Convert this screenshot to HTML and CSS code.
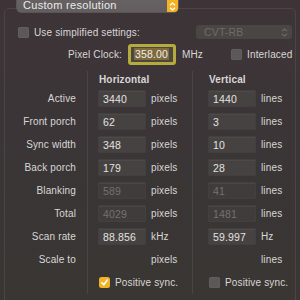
FILE: index.html
```html
<!DOCTYPE html>
<html>
<head>
<meta charset="utf-8">
<link rel="stylesheet" href="styles.css">
</head>
<body>
<div class="popup">
  <span class="popup-text">Custom resolution</span>
  <span class="stepper"><svg width="7" height="9" viewBox="0 0 7 9"><path d="M1 3.2 L3.5 1 L6 3.2 M1 5.8 L3.5 8 L6 5.8" fill="none" stroke="#fff" stroke-width="1.2"/></svg></span>
</div>
<div class="group">
  <div class="row-top">
    <label class="check"><span class="box"></span><span>Use simplified settings:</span></label>
    <div class="popup-dis"><span>CVT-RB</span><svg width="7" height="9" viewBox="0 0 7 9"><path d="M1 3.2 L3.5 1 L6 3.2 M1 5.8 L3.5 8 L6 5.8" fill="none" stroke="#6d6a68" stroke-width="1.1"/></svg></div>
  </div>
  <div class="row-clock">
    <span class="clock-label">Pixel Clock:</span>
    <div class="focus"><div class="clock-field"><span class="sel">358.00</span></div></div>
    <span class="unit-mhz">MHz</span>
    <label class="check interlaced"><span class="box"></span><span>Interlaced</span></label>
  </div>
  <div class="table">
    <div class="col labels">
      <div class="head"></div>
      <div class="cell">Active</div>
      <div class="cell">Front porch</div>
      <div class="cell">Sync width</div>
      <div class="cell">Back porch</div>
      <div class="cell">Blanking</div>
      <div class="cell">Total</div>
      <div class="cell">Scan rate</div>
      <div class="cell">Scale to</div>
      <div class="cell"></div>
    </div>
    <div class="col hcol">
      <div class="head">Horizontal</div>
      <div class="cell"><span class="field">3440</span><span class="unit">pixels</span></div>
      <div class="cell"><span class="field">62</span><span class="unit">pixels</span></div>
      <div class="cell"><span class="field">348</span><span class="unit">pixels</span></div>
      <div class="cell"><span class="field">179</span><span class="unit">pixels</span></div>
      <div class="cell"><span class="field dis">589</span><span class="unit">pixels</span></div>
      <div class="cell"><span class="field dis">4029</span><span class="unit">pixels</span></div>
      <div class="cell"><span class="field">88.856</span><span class="unit">kHz</span></div>
      <div class="cell"><span class="field blank"></span><span class="unit">pixels</span></div>
      <div class="cell"><label class="check"><span class="box on"><svg width="9" height="9" viewBox="0 0 9 9"><path d="M1.8 4.8 L3.8 6.8 L7.3 2" fill="none" stroke="#fff" stroke-width="1.6" stroke-linecap="round" stroke-linejoin="round"/></svg></span><span>Positive sync.</span></label></div>
    </div>
    <div class="col vcol">
      <div class="head">Vertical</div>
      <div class="cell"><span class="field">1440</span><span class="unit">lines</span></div>
      <div class="cell"><span class="field">3</span><span class="unit">lines</span></div>
      <div class="cell"><span class="field">10</span><span class="unit">lines</span></div>
      <div class="cell"><span class="field">28</span><span class="unit">lines</span></div>
      <div class="cell"><span class="field dis">41</span><span class="unit">lines</span></div>
      <div class="cell"><span class="field dis">1481</span><span class="unit">lines</span></div>
      <div class="cell"><span class="field">59.997</span><span class="unit">Hz</span></div>
      <div class="cell"><span class="field blank"></span><span class="unit">lines</span></div>
      <div class="cell"><label class="check"><span class="box"></span><span>Positive sync.</span></label></div>
    </div>
  </div>
</div>
</body>
</html>
```
FILE: styles.css
```css
* { box-sizing: border-box; }
html, body { margin: 0; height: 300px; overflow: hidden; }
body {
  background: linear-gradient(180deg, #3e3438 0%, #3b3537 40%, #393633 100%);
  font-family: "Liberation Sans", Arial, sans-serif;
  font-size: 10px;
  color: #d9d7d6;
  letter-spacing: 0.15px;
  white-space: nowrap;
}
.popup {
  position: relative;
  z-index: 1;
  margin: -9px 0 0 17px;
  width: 161px;
  height: 21px;
  border-radius: 4px;
  background: linear-gradient(180deg, #6a6465, #625d5e);
  box-shadow: 0 0 0 0.5px #7a7475;
  display: flex;
  align-items: flex-end;
  justify-content: space-between;
  color: #ecebeb;
}
.popup-text { padding: 0 0 1px 6px; font-size: 11px; line-height: 11px; letter-spacing: 0.3px; }
.stepper {
  width: 11px;
  height: 12px;
  background: #f2b324;
  border-radius: 0 0 4px 0;
  display: flex;
  align-items: center;
  justify-content: center;
}
.group {
  margin: -4px 4px 0 4px;
  height: 320px;
  border: 1px solid #4c4548;
  border-radius: 5px;
  padding: 16px 0 0 13px;
}
.row-top {
  display: flex;
  align-items: center;
  height: 14px;
}
.check { display: flex; align-items: center; gap: 5px; flex-shrink: 0; }
.box {
  width: 11px;
  height: 11px;
  flex-shrink: 0;
  border-radius: 2.5px;
  background: #5c5858;
  box-shadow: inset 0 0 0 0.5px #686464;
  display: flex;
  align-items: center;
  justify-content: center;
}
.box.on { background: #f2b324; box-shadow: none; }
.popup-dis {
  margin-left: auto;
  margin-right: 3px;
  width: 96px;
  height: 14px;
  flex-shrink: 0;
  border-radius: 3px;
  background: #4a4644;
  color: #6f6b69;
  display: flex;
  align-items: center;
  justify-content: space-between;
  padding: 0 4px 0 8px;
  font-size: 10.5px;
}
.row-clock {
  display: flex;
  align-items: center;
  height: 22px;
  margin-top: 4px;
}
.row-clock > * { flex-shrink: 0; }
.clock-label { width: 104px; text-align: right; }
.focus {
  margin-left: 6px;
  width: 48px;
  height: 21px;
  border: 3px solid #b6aa3c;
  border-radius: 3px;
}
.clock-field {
  height: 100%;
  background: #4a4644;
  display: flex;
  align-items: center;
  padding-left: 3px;
}
.sel { background: #7e6a3b; color: #f0eeee; padding: 0 1px; line-height: 12px; font-size: 10.5px; }
.unit-mhz { margin-left: 6px; }
.interlaced { margin-left: 28px; }
.table {
  display: flex;
  margin: 6px 0 0 -13px;
}
.col { display: flex; flex-direction: column; }
.labels { width: 82px; text-align: right; padding-right: 11px; }
.hcol { width: 105px; border-left: 1px solid #4a4545; padding-left: 11px; }
.vcol { flex: 1; border-left: 1px solid #4a4545; padding-left: 16px; }
.head { height: 16px; font-weight: bold; display: flex; align-items: center; }
.cell { height: 23px; display: flex; align-items: center; justify-content: flex-end; }
.hcol .cell, .vcol .cell { justify-content: flex-start; }
.field {
  width: 46px;
  height: 15px;
  flex-shrink: 0;
  background: #464241;
  box-shadow: inset 0 0.5px 0 #555150, 0 0 0 0.5px #4e4a49;
  display: flex;
  align-items: center;
  padding-left: 4px;
  color: #e4e2e1;
  font-size: 10.5px;
}
.field.dis { background: #403c3b; color: #75716f; }
.field.blank { background: transparent; box-shadow: none; }
.unit { margin-left: 6px; }
```
